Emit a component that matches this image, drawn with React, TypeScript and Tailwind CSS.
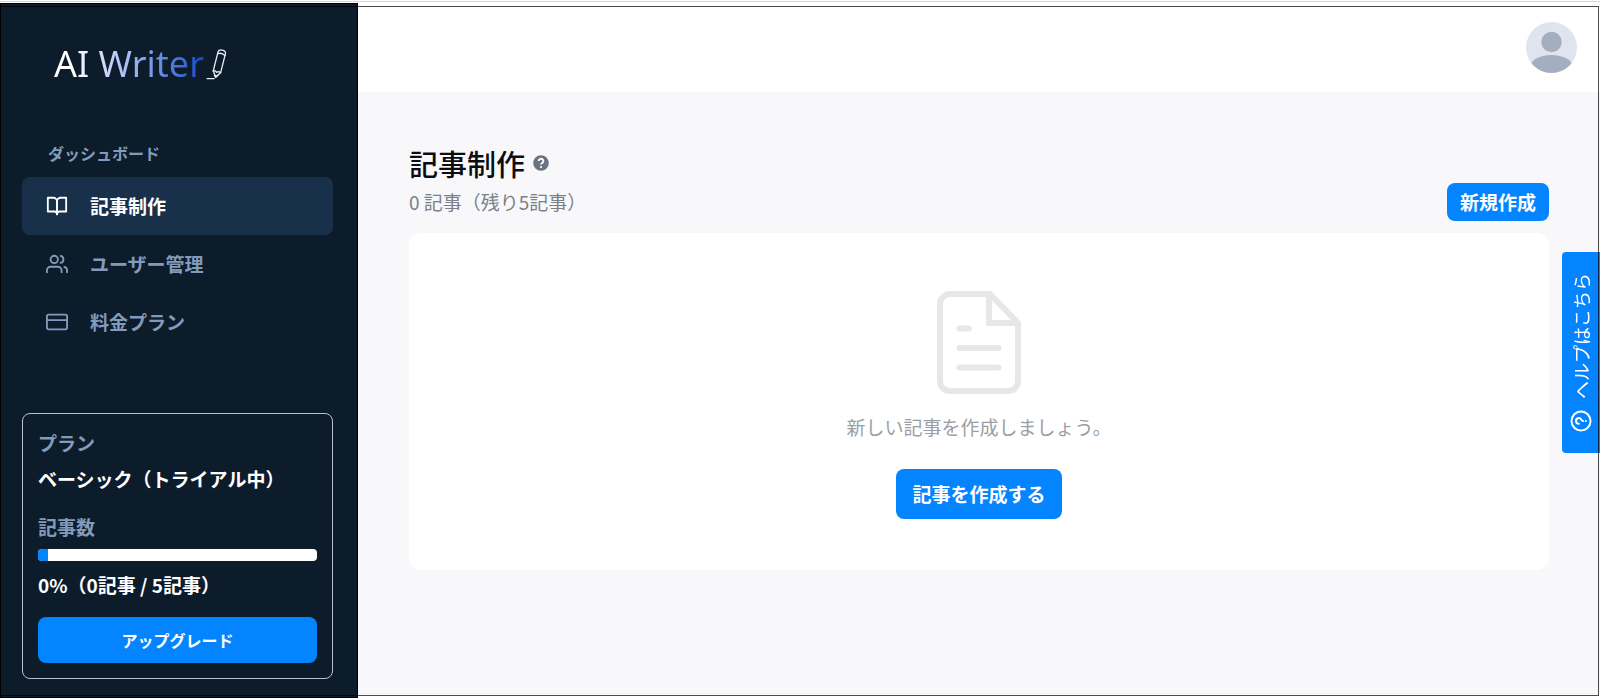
import React from "react";

type NavItem = { label: string; icon: React.ReactNode; active?: boolean };

const iconProps = {
  width: 22,
  height: 22,
  viewBox: "0 0 24 24",
  fill: "none",
  stroke: "currentColor",
  strokeWidth: 2,
  strokeLinecap: "round" as const,
  strokeLinejoin: "round" as const,
  "aria-hidden": true,
};

const navItems: NavItem[] = [
  {
    label: "記事制作",
    active: true,
    icon: (
      <svg {...iconProps}>
        <path d="M2 3h6a4 4 0 0 1 4 4v14a3 3 0 0 0-3-3H2z" />
        <path d="M22 3h-6a4 4 0 0 0-4 4v14a3 3 0 0 1 3-3h7z" />
      </svg>
    ),
  },
  {
    label: "ユーザー管理",
    icon: (
      <svg {...iconProps}>
        <path d="M17 21v-2a4 4 0 0 0-4-4H5a4 4 0 0 0-4 4v2" />
        <circle cx="9" cy="7" r="4" />
        <path d="M23 21v-2a4 4 0 0 0-3-3.87" />
        <path d="M16 3.13a4 4 0 0 1 0 7.75" />
      </svg>
    ),
  },
  {
    label: "料金プラン",
    icon: (
      <svg {...iconProps}>
        <rect x="1" y="4" width="22" height="16" rx="2" />
        <path d="M1 10h22" />
      </svg>
    ),
  },
];

function Logo() {
  return (
    <a href="#" className="flex items-center gap-[2px] pl-8">
      <span className="bg-linear-to-r from-white from-12% via-[#b4c4f6] via-45% to-[#1148c8] bg-clip-text font-['Noto_Sans'] text-4xl leading-10 font-normal text-transparent">
        AI Writer
      </span>
      <svg width="21" height="32" viewBox="0 0 22 34" fill="none" stroke="#e8edf3" strokeWidth="1.4" strokeLinecap="round" strokeLinejoin="round" aria-hidden="true">
        <path d="M7.5 24.5 12.6 4.2Q13.4 1.5 17 2.2Q21 3 20.5 6L15.4 26.2L10.2 30.8Z" />
        <path d="M12.2 6Q16.5 4.5 20 8" />
        <path d="M7.5 24.5Q9.5 23.5 11.2 25.8Q13.5 24.5 15.4 26.2" />
        <path d="M9 29.2 10.2 30.8 12.2 29" strokeWidth="1.8" />
        <path d="M1 32.5H8.5" />
      </svg>
    </a>
  );
}

function PlanCard() {
  return (
    <section className="mt-[62px] rounded-lg border border-[#b9c3cd] px-[15px] py-[15px]">
      <p className="leading-7 text-[#839bbb]">プラン</p>
      <p className="mt-2 leading-7 text-white">ベーシック（トライアル中）</p>
      <p className="mt-5 leading-7 text-[#839bbb]">記事数</p>
      <div role="progressbar" aria-label="記事数" aria-valuenow={0} className="mt-2 h-3 overflow-hidden rounded bg-white">
        <div className="h-full w-[10px] bg-[#0485ff]" />
      </div>
      <p className="mt-[10px] leading-7 text-white">0%（0記事 / 5記事）</p>
      <button type="button" className="mt-[18px] h-[46px] w-full rounded-lg bg-[#0485ff] text-base font-bold text-white">
        アップグレード
      </button>
    </section>
  );
}

function Sidebar() {
  return (
    <aside className="mt-[3px] w-[358px] shrink-0 border border-black bg-[#0d1c2b] pt-10 pr-6 pb-4 pl-[21px] text-[19px] font-bold">
      <Logo />
      <h2 className="mt-[57px] pl-[26px] text-base leading-6 text-[#839bbb]">ダッシュボード</h2>
      <nav className="mt-3 flex flex-col">
        {navItems.map((item) => (
          <a
            key={item.label}
            href="#"
            className={
              item.active
                ? "flex h-[58px] items-center gap-[22px] rounded-lg bg-[#19304a] px-6 text-white"
                : "flex h-[58px] items-center gap-[22px] rounded-lg px-6 text-[#839bbb]"
            }
          >
            {item.icon}
            {item.label}
          </a>
        ))}
      </nav>
      <PlanCard />
    </aside>
  );
}

function Avatar() {
  return (
    <button type="button" aria-label="アカウント" className="size-[51px] overflow-hidden rounded-full bg-[#dfe4ee]">
      <svg viewBox="0 0 51 51" fill="#a3aec0" aria-hidden="true">
        <circle cx="25.5" cy="20" r="10.2" />
        <ellipse cx="25.5" cy="44.5" rx="21" ry="11.5" />
      </svg>
    </button>
  );
}

function DocumentIcon() {
  return (
    <svg width="84" height="104" viewBox="0 0 84 104" fill="none" stroke="#e6e7e9" strokeWidth="6" strokeLinejoin="round" strokeLinecap="round" aria-hidden="true">
      <path d="M53 3H13A10 10 0 0 0 3 13V90A10 10 0 0 0 13 100H71A10 10 0 0 0 81 90V32Z" />
      <path d="M52 4V32H80" strokeLinejoin="miter" />
      <path d="M22.5 37.5H32M22.5 57H61.5M22.5 76.5H61.5" />
    </svg>
  );
}

function HelpTab() {
  return (
    <button
      type="button"
      className="fixed top-[252px] right-0 flex h-[201px] w-[38px] rotate-180 items-center gap-[11px] rounded-r bg-[#0485ff] pt-[21px] text-lg text-white [text-orientation:sideways] [writing-mode:vertical-rl]"
    >
      <svg width="22" height="22" viewBox="0 0 22 22" fill="none" stroke="currentColor" strokeWidth="2" strokeLinecap="round" className="rotate-90" aria-hidden="true">
        <circle cx="11" cy="11" r="9.5" />
        <path d="M8.3 8.8a2.8 2.8 0 1 1 4.2 2.4c-1 .6-1.5 1-1.5 1.9" />
        <path d="M11 15.8v.1" />
      </svg>
      ヘルプはこちら
    </button>
  );
}

export default function App() {
  return (
    <div className="relative flex min-h-screen bg-white font-['Noto_Sans_CJK_JP',sans-serif] text-[19px]">
      <div className="absolute inset-x-0 top-px h-px bg-[#d5d9dc]" />
      <Sidebar />
      <div className="mt-[7px] mb-[3px] flex min-w-0 grow flex-col">
        <header className="flex h-[85px] shrink-0 items-center justify-end bg-white pr-[23px] pb-1">
          <Avatar />
        </header>
        <main className="grow bg-[#f8f8fb] pt-[49px] pr-[51px] pl-[51px]">
          <div className="flex items-end justify-between">
            <div className="pb-[2px]">
              <div className="flex items-center gap-2">
                <h1 className="text-[29px] leading-[44px] font-medium text-[#0b0d10]">記事制作</h1>
                <button type="button" aria-label="ヘルプ" className="text-[#6b7280]">
                  <svg width="16" height="16" viewBox="0 0 16 16" aria-hidden="true">
                    <circle cx="8" cy="8" r="7.8" fill="currentColor" />
                    <path d="M5.7 6.1a2.3 2.3 0 1 1 3.5 1.9c-.8.5-1.2.8-1.2 1.6" fill="none" stroke="#fff" strokeWidth="1.8" />
                    <circle cx="8" cy="12" r="1.1" fill="#fff" />
                  </svg>
                </button>
              </div>
              <p className="leading-[34px] text-[#7b8087]">0 記事（残り5記事）</p>
            </div>
            <button type="button" className="h-[38px] rounded-lg bg-[#0485ff] px-[13px] font-bold text-white">
              新規作成
            </button>
          </div>
          <section className="mt-3 flex flex-col items-center rounded-xl bg-white pt-[58px] pb-[51px]">
            <DocumentIcon />
            <p className="mt-[18px] leading-7 text-[#9b9ea5]">新しい記事を作成しましょう。</p>
            <button type="button" className="mt-7 h-[50px] rounded-lg bg-[#0485ff] px-4 font-bold text-white">
              記事を作成する
            </button>
          </section>
        </main>
      </div>
      <HelpTab />
      <div className="pointer-events-none absolute top-[6px] right-px bottom-[2px] left-0 border border-black/70" />
    </div>
  );
}
